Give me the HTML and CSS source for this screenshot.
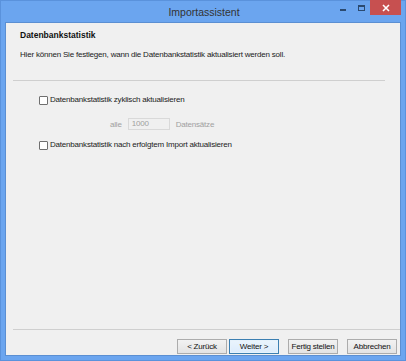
FILE: index.html
```html
<!DOCTYPE html>
<html lang="de">
  <head>
    <meta charset="UTF-8" />
    <title>Importassistent</title>
    <link rel="stylesheet" href="styles.css">
  </head>
  <body>
    <div class="window">
      <div class="titlebar">
        <span class="title">Importassistent</span>
        <div class="controls">
          <span class="ctl min"></span>
          <span class="ctl max"></span>
          <span class="ctl close">
            <svg width="8" height="8" viewBox="0 0 8 8">
              <path d="M1 1 L7 7 M7 1 L1 7" stroke="#fff" stroke-width="1.6" />
            </svg>
          </span>
        </div>
      </div>

      <div class="content">
        <div class="page-head">
          <h1>Datenbankstatistik</h1>
          <p>Hier können Sie festlegen, wann die Datenbankstatistik aktualisiert werden soll.</p>
        </div>
        <hr class="sep top-sep" />

        <div class="options">
          <label class="check">
            <span class="box"></span>
            Datenbankstatistik zyklisch aktualisieren
          </label>
          <div class="interval">
            <span>alle</span>
            <span class="field">1000</span>
            <span>Datensätze</span>
          </div>
          <label class="check">
            <span class="box"></span>
            Datenbankstatistik nach erfolgtem Import aktualisieren
          </label>
        </div>

        <hr class="sep bottom-sep" />
        <div class="buttons">
          <button>&lt; Zurück</button>
          <button class="default">Weiter &gt;</button>
          <button class="gap">Fertig stellen</button>
          <button class="gap">Abbrechen</button>
        </div>
      </div>
    </div>
  </body>
</html>
```

FILE: styles.css
```css
* {
  margin: 0;
  padding: 0;
  box-sizing: border-box;
  font-family: "Liberation Sans", Arial, sans-serif;
}
body {
  background: #6ba5ef;
  width: 406px;
  height: 361px;
  overflow: hidden;
}

/* Window frame */
.window {
  width: 406px;
  height: 361px;
  background: #6ba5ef;
  border: 1px solid #5a92dc;
  padding: 0 4px 4px 4px;
  display: flex;
  flex-direction: column;
}
.titlebar {
  height: 21px;
  position: relative;
  display: flex;
  justify-content: center;
  align-items: center;
}
.title {
  font-size: 10.5px;
  color: #333;
  margin-left: 2px;
}
.controls {
  position: absolute;
  right: 0;
  top: -1px;
  display: flex;
  align-items: flex-start;
}
.ctl {
  display: block;
}
.min {
  width: 6px;
  height: 2px;
  background: #2b4a70;
  margin: 9px 12px 0 0;
}
.max {
  width: 7px;
  height: 6px;
  border: 1px solid #2b4a70;
  border-top-width: 2px;
  margin: 5px 5px 0 0;
}
.close {
  width: 31px;
  height: 15px;
  background: #c75050;
  display: flex;
  justify-content: center;
  align-items: center;
}

/* Client area */
.content {
  flex: 1;
  background: #f0f0f0;
  border: 1px solid #5b8fd2;
  display: flex;
  flex-direction: column;
  font-size: 8px;
  letter-spacing: -0.2px;
  color: #222;
}
.page-head {
  padding: 7px 0 0 14px;
}
.page-head h1 {
  font-size: 8.5px;
  font-weight: bold;
  color: #111;
  line-height: 10px;
  letter-spacing: 0;
}
.page-head p {
  margin-top: 10px;
  line-height: 10px;
}
.sep {
  border: none;
  height: 1px;
  background: #cfcfcf;
  margin-left: 7px;
}
.top-sep {
  margin-top: 20px;
  margin-right: 15px;
}
.options {
  flex: 1;
  padding: 14px 0 0 33px;
}
.check {
  display: flex;
  align-items: center;
  gap: 2px;
  line-height: 10px;
}
.box {
  width: 9px;
  height: 9px;
  border: 1px solid #6f6f6f;
  background: #fff;
  border-radius: 1px;
}
.interval {
  display: flex;
  align-items: center;
  gap: 6px;
  color: #a0a0a0;
  padding-left: 71px;
  margin: 13px 0 10px;
}
.field {
  width: 42px;
  height: 12px;
  border: 1px solid #d9d9d9;
  background: #f0f0f0;
  padding-left: 3px;
  line-height: 10px;
}
.bottom-sep {
  margin-right: 0;
}
.buttons {
  display: flex;
  justify-content: flex-end;
  padding: 9px 3px 1px 0;
  gap: 2px;
}
.buttons button {
  width: 50px;
  height: 15px;
  font-size: 8px;
  letter-spacing: -0.2px;
  color: #111;
  background: linear-gradient(#f2f2f2, #e3e3e3);
  border: 1px solid #acacac;
}
.buttons button.default {
  border-color: #3c7fb1;
  background: linear-gradient(#eaf4fc, #dcecfc);
  box-shadow: inset 0 0 0 1px #e6f2fb;
}
.buttons button.gap {
  margin-left: 7px;
}
```
